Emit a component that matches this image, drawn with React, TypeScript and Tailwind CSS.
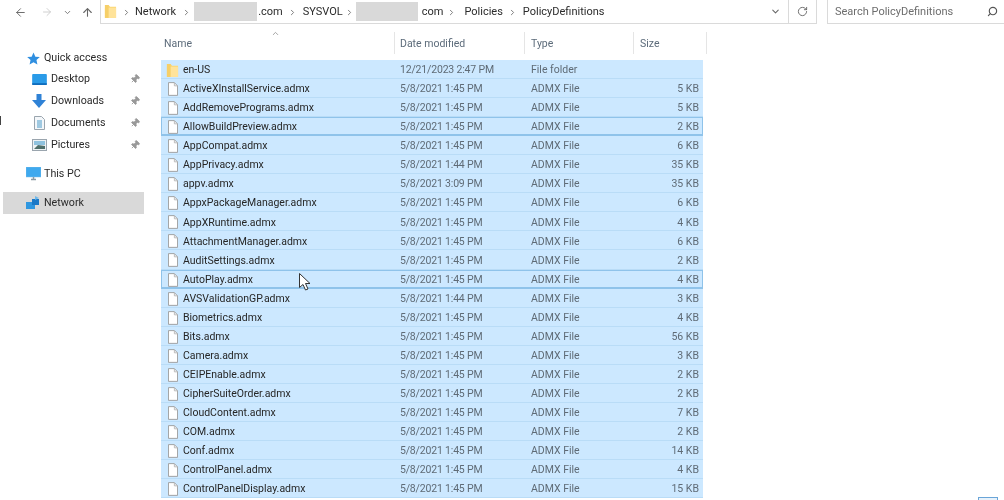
import React from 'react';
import { ArrowLeft, ArrowRight, ArrowUp, ChevronDown, ChevronRight, RotateCw, Search, Pin, ChevronUp } from 'lucide-react';

type Row = { name: string; date: string; type: string; size: string; focus?: boolean };

const files: [string, string, string, boolean?][] = [
  ['ActiveXInstallService', '1:45', '5'],
  ['AddRemovePrograms', '1:45', '5'],
  ['AllowBuildPreview', '1:45', '2', true],
  ['AppCompat', '1:45', '6'],
  ['AppPrivacy', '1:44', '35'],
  ['appv', '3:09', '35'],
  ['AppxPackageManager', '1:45', '6'],
  ['AppXRuntime', '1:45', '4'],
  ['AttachmentManager', '1:45', '6'],
  ['AuditSettings', '1:45', '2'],
  ['AutoPlay', '1:45', '4', true],
  ['AVSValidationGP', '1:44', '3'],
  ['Biometrics', '1:45', '4'],
  ['Bits', '1:45', '56'],
  ['Camera', '1:45', '3'],
  ['CEIPEnable', '1:45', '2'],
  ['CipherSuiteOrder', '1:45', '2'],
  ['CloudContent', '1:45', '7'],
  ['COM', '1:45', '2'],
  ['Conf', '1:45', '14'],
  ['ControlPanel', '1:45', '4'],
  ['ControlPanelDisplay', '1:45', '15'],
];

const rows: Row[] = [
  { name: 'en-US', date: '12/21/2023 2:47 PM', type: 'File folder', size: '' },
  ...files.map(([n, t, s, f]) => ({
    name: n + '.admx',
    date: `5/8/2021 ${t} PM`,
    type: 'ADMX File',
    size: `${s} KB`,
    focus: f,
  })),
];

const Folder = ({ className }: { className: string }) => (
  <svg viewBox="0 0 14 14" className={className} preserveAspectRatio="none">
    <path d="M1 1h4l1.500 1.500H13V13H1z" fill="#fbd774" />
    <path d="M1 3.500h12V13H1z" fill="#ffe39a" />
    <path d="M1 1h4v12H1z" fill="#f6cf68" />
  </svg>
);

const FileIcon = () => (
  <svg viewBox="0 0 11 15" className="w-[10px] h-[14px] shrink-0 ml-[1px]">
    <path d="M.5.500h6.500l3.500 3.500v10.500H.5z" fill="#fff" stroke="#9a9a9a" strokeWidth="1" />
    <path d="M7 .500V4h3.500" fill="none" stroke="#b5b5b5" strokeWidth="1" />
  </svg>
);

const Sep = () => <ChevronRight className="w-[9px] h-[9px] text-[#777] shrink-0" strokeWidth={2.5} />;

const Redacted = ({ w }: { w: string }) => <div className={`h-[19px] -mt-[2px] bg-[#d9d9d9] shrink-0 ${w}`} />;

const Toolbar = () => (
  <div className="flex items-center h-[24px] text-[11px] text-[#2b2b2b]">
    <div className="w-[100px] flex items-center shrink-0">
      <ArrowLeft className="ml-[14px] w-[13px] h-[13px] text-[#666]" strokeWidth={1.75} />
      <ArrowRight className="ml-[14px] w-[12px] h-[12px] text-[#c9c9c9]" strokeWidth={1.75} />
      <ChevronDown className="ml-[10px] w-[9px] h-[9px] text-[#777]" strokeWidth={2.5} />
      <ArrowUp className="ml-[9px] w-[13px] h-[13px] text-[#666]" strokeWidth={2} />
    </div>
    <div className="w-[717px] h-[25px] -mt-px pt-[2px] flex items-center border-l border-b border-r border-[#dadada] shrink-0">
      <Folder className="ml-[3px] w-[13px] h-[15px] -mt-[2px] shrink-0" />
      <div className="ml-[5px]"><Sep /></div>
      <span className="ml-[4px]">Network</span>
      <div className="ml-[6px]"><Sep /></div>
      <div className="ml-[3px]"><Redacted w="w-[63px]" /></div>
      <span className="ml-[1px]">.com</span>
      <div className="ml-[5px]"><Sep /></div>
      <span className="ml-[6px]">SYSVOL</span>
      <div className="ml-[2px]"><Sep /></div>
      <div className="ml-[2px]"><Redacted w="w-[62px]" /></div>
      <span className="ml-[4px]">com</span>
      <div className="ml-[4px]"><Sep /></div>
      <span className="ml-[8px]">Policies</span>
      <div className="ml-[5px]"><Sep /></div>
      <span className="ml-[6px]">PolicyDefinitions</span>
      <ChevronDown className="ml-auto mr-[7px] w-[11px] h-[11px] -mt-[2px] text-[#666]" strokeWidth={2.25} />
      <div className="w-px h-[23px] -mt-[2px] bg-[#dadada]" />
      <RotateCw className="mx-[8px] w-[11px] h-[11px] -mt-[2px] text-[#666]" strokeWidth={2} />
    </div>
    <div className="ml-[10px] flex-1 h-[25px] -mt-px pt-[2px] flex items-center border-l border-b border-[#dadada] pl-[7px] text-[#6d6d6d]">
      <span>Search PolicyDefinitions</span>
      <Search className="ml-auto mr-[6px] w-[11px] h-[11px] -mt-[2px] text-[#555] -scale-x-100" strokeWidth={2.5} />
    </div>
  </div>
);

const NavItem = ({ icon, label, pin, active, sub }: { icon: React.ReactNode; label: string; pin?: boolean; active?: boolean; sub?: boolean }) => (
  <div className={`h-[22px] flex items-center w-[141px] ${active ? 'bg-[#d9d9d9]' : ''}`}>
    <div className={`flex justify-center shrink-0 w-[20px] ${sub ? 'ml-[26px]' : 'ml-[20px]'}`}>{icon}</div>
    <span className={sub ? 'ml-[2px]' : 'ml-[1px]'}>{label}</span>
    {pin && <Pin className="ml-auto mr-[4px] w-[10px] h-[10px] text-[#9a9a9a] fill-[#9a9a9a] rotate-45" strokeWidth={2} />}
  </div>
);

const Sidebar = () => (
  <div className="w-[161px] shrink-0 pl-[3px] pt-[22px] text-[10.7px] text-[#2b2b2b] flex flex-col">
    <div className="pt-px h-[22px]">
      <NavItem label="Quick access" icon={
        <svg viewBox="0 0 14 14" className="w-[13px] h-[13px]"><path d="M7 .500l2 4.500 4.800.500-3.600 3.200 1 4.800L7 11l-4.200 2.500 1-4.800L.2 5.500 5 5z" fill="#2f8fe0" /></svg>
      } />
    </div>
    <NavItem sub pin label="Desktop" icon={
      <svg viewBox="0 0 16 12" className="w-[15px] h-[11px]"><rect x="0" y="0" width="16" height="11" rx="1" fill="#2a9be8" /><rect x="0" y="10" width="16" height="2" fill="#0f6cbd" /></svg>
    } />
    <NavItem sub pin label="Downloads" icon={
      <svg viewBox="0 0 14 14" className="w-[14px] h-[14px]"><path d="M4.500 0h5v6H14l-7 8-7-8h4.500z" fill="#2f82d6" /></svg>
    } />
    <NavItem sub pin label="Documents" icon={
      <svg viewBox="0 0 11 14" className="w-[11px] h-[14px]"><path d="M.5.500h7l3 3v10H.5z" fill="#f4f7fa" stroke="#9aa5ae" /><path d="M3 5h5M3 7h5M3 9h5M3 11h5" stroke="#4a9bc9" strokeWidth="1" /></svg>
    } />
    <NavItem sub pin label="Pictures" icon={
      <svg viewBox="0 0 15 12" className="w-[15px] h-[12px]"><rect x=".5" y=".5" width="14" height="11" fill="#eef2f4" stroke="#9aa5ae" /><rect x="2" y="2" width="11" height="4" fill="#8fc2de" /><path d="M2 10l4-4 7 1v3z" fill="#4f6f6a" /></svg>
    } />
    <div className="h-[7px]" />
    <NavItem label="This PC" icon={
      <svg viewBox="0 0 15 14" className="w-[15px] h-[14px]"><rect x="0" y="0" width="15" height="10" fill="#3fa9ee" stroke="#7fbfe8" strokeWidth=".5" /><path d="M5 12.500h5M7.500 10v2.500" stroke="#8a9aa5" strokeWidth="1.500" /></svg>
    } />
    <div className="h-[7px]" />
    <NavItem active label="Network" icon={
      <svg viewBox="0 0 15 14" className="w-[15px] h-[14px]"><path d="M0 6h9v7H0z" fill="#2f97e0" /><path d="M6 3h7v6H6z" fill="#1b78c6" /><path d="M9 0l4 2-4 2z" fill="#6fb9ea" /></svg>
    } />
  </div>
);

const Header = () => (
  <div className="h-[36px] flex text-[10.5px] text-[#5c6b7a] relative">
    <ChevronUp className="absolute left-[110px] top-[5px] w-[9px] h-[9px] text-[#888]" strokeWidth={2} />
    <div className="w-[234px] pl-[3px] shrink-0 border-r border-[#e5e5e5] h-[22px] mt-[8px] pt-[4px]">Name</div>
    <div className="w-[130px] pl-[5px] shrink-0 border-r border-[#e5e5e5] h-[22px] mt-[8px] pt-[4px]">Date modified</div>
    <div className="w-[109px] pl-[6px] shrink-0 border-r border-[#e5e5e5] h-[22px] mt-[8px] pt-[4px]">Type</div>
    <div className="w-[73px] pl-[6px] shrink-0 border-r border-[#e5e5e5] h-[22px] mt-[8px] pt-[4px]">Size</div>
  </div>
);

const FileRow = ({ row }: { row: Row }) => (
  <div className={`h-[19.06px] pt-[2px] flex items-center border-b text-[10.5px] bg-[#cce8ff] ${row.focus ? 'border-[#8fc3ea] shadow-[inset_0_0_0_1px_#8fc3ea]' : 'border-[#b9dcf7]'}`}>
    <div className="w-[239px] shrink-0 flex items-center pl-[6px] gap-[5px] text-[#262626]">
      {row.size ? <FileIcon /> : <Folder className="w-[13px] h-[15px] mx-[-1px] shrink-0" />}
      <span>{row.name}</span>
    </div>
    <div className="w-[131px] shrink-0 text-[#5f6b76] tracking-[-0.18px]">{row.date}</div>
    <div className="w-[104px] shrink-0 text-[#5f6b76]">{row.type}</div>
    <div className="flex-1 text-right pr-[4px] text-[#5f6b76]">{row.size}</div>
  </div>
);

export default function App() {
  return (
    <div className="relative w-[1004px] h-[500px] overflow-hidden bg-white blur-[0.3px] font-['Roboto','Open_Sans',sans-serif]">
      <Toolbar />
      <div className="flex">
        <Sidebar />
        <div className="w-[542px] shrink-0">
          <Header />
          {rows.map(r => <FileRow key={r.name} row={r} />)}
        </div>
      </div>
      {/* leftovers at the edges of the capture, and the mouse pointer */}
      <div className="absolute left-0 top-[116px] w-px h-[9px] bg-[#444]" />
      <div className="absolute left-[978px] top-[497px] w-[20px] h-[4px] border border-[#6aa5d8] bg-[#e8f2fb]" />
      <svg viewBox="0 0 12 18" className="absolute left-[299px] top-[273px] w-[12px] h-[18px]">
        <path d="M.5.500v14l3.500-3 2.500 5.500 2.500-1-2.500-5.500h4.500z" fill="#fff" stroke="#333" strokeWidth="1" />
      </svg>
    </div>
  );
}
